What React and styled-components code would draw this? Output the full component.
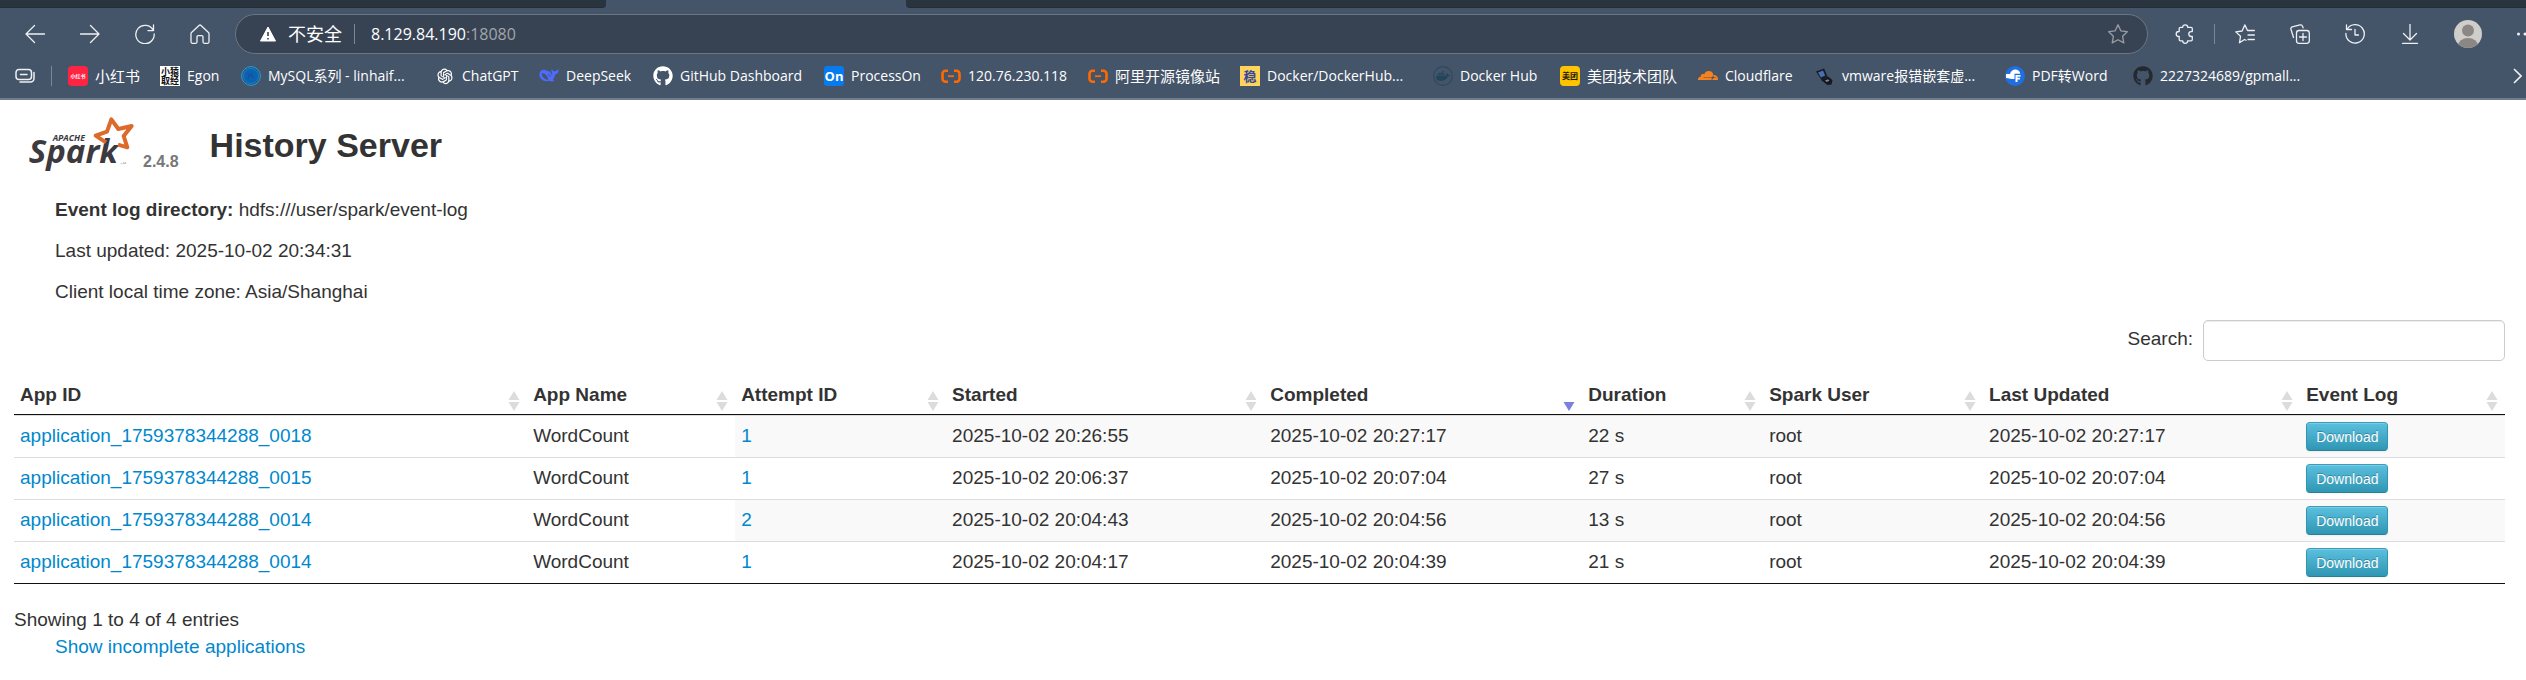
import React from 'react';
import styled, { createGlobalStyle } from 'styled-components';
import { FaGithub, FaDocker, FaCloudflare } from 'react-icons/fa';
import { AiOutlineOpenAI } from 'react-icons/ai';

const GlobalStyle = createGlobalStyle`
  * { box-sizing: border-box; }
  body {
    margin: 0;
    background: #fff;
    color: #333;
    font: 19px/27px "Liberation Sans", "Noto Sans CJK SC", sans-serif;
    overflow-x: hidden;
  }
`;

/* ---------- browser chrome ---------- */

const Chrome = styled.header`
  background: #445469;
  border-bottom: 2px solid #717c8c;
  color: #fff;
  font-family: "Open Sans", "Noto Sans CJK SC", sans-serif;
`;

const TabStrip = styled.div`
  display: flex;
  height: 8px;
`;

const InactiveTabs = styled.div`
  background: #2a343f;
  border-bottom: 1px solid #242c36;
  flex: ${(p) => (p.$last ? '1' : '0 0 24%')};
  border-radius: ${(p) => (p.$last ? '0 0 0 4px' : '0 0 4px 0')};
`;

const ActiveTab = styled.div`
  flex: 0 0 300px;
`;

const Toolbar = styled.div`
  display: flex;
  align-items: center;
  padding: 6px 0 0 7px;
  height: 46px;
`;

const ToolButton = styled.button`
  display: flex;
  align-items: center;
  justify-content: center;
  flex: 0 0 ${(p) => p.$width || 55}px;
  height: 40px;
  padding: 0;
  border: 0;
  background: none;
  color: #eef0f3;

  svg { flex: none; }
`;

const MoreButton = styled(ToolButton)`
  justify-content: flex-start;
  padding-left: 16px;
  overflow: hidden;
`;

const AddressBar = styled.div`
  flex: 1;
  min-width: 0;
  height: 40px;
  margin: 0 9px 0 8px;
  padding: 0 19px 0 24px;
  display: flex;
  align-items: center;
  background: #374353;
  border: 1px solid #6b7686;
  border-radius: 20px;
  font-size: 16px;
`;

const Insecure = styled.span`
  margin-left: 12px;
  font-size: 18px;
`;

const Divider = styled.span`
  flex: none;
  width: 1px;
  height: 20px;
  background: #7c8796;
  margin: 0 ${(p) => p.$gap || 0}px;
`;

const Address = styled.span`
  flex: 1;
  padding-left: 4px;
  color: #fff;
`;

const Port = styled.span`
  color: #a2a5aa;
`;

const StarButton = styled.button`
  display: flex;
  padding: 0;
  border: 0;
  background: none;
  color: #9a9da2;
`;

const BookmarkBar = styled.nav`
  display: flex;
  align-items: center;
  height: 44px;
  padding: 0 4px 0 15px;
`;

const BookmarkList = styled.div`
  display: flex;
  flex: 1;
  min-width: 0;
  overflow: hidden;
`;

const Bookmark = styled.a`
  display: flex;
  align-items: center;
  gap: 7px;
  flex: 0 0 ${(p) => p.$width}px;
  color: #fff;
  font-size: ${(p) => (p.$cjk ? 15 : 14)}px;
  line-height: 20px;
  text-decoration: none;
  white-space: nowrap;

  svg { flex: none; }
`;

const BarButton = styled.button`
  display: flex;
  flex: none;
  padding: 0;
  border: 0;
  background: none;
  color: #eef0f3;
`;

const Icon = ({ children, size = 20, width = 1.3 }) => (
  <svg width={size} height={size} viewBox="0 0 20 20" fill="none" stroke="currentColor"
    strokeWidth={width} strokeLinecap="round" strokeLinejoin="round" aria-hidden="true">
    {children}
  </svg>
);

const BackIcon = () => <Icon><path d="M19.5 10H1M9.5 1.5 1 10l8.500 8.500" /></Icon>;
const ForwardIcon = () => <Icon><path d="M.5 10H19M10.500 1.500 19 10l-8.500 8.500" /></Icon>;
const ReloadIcon = () => (
  <Icon><path d="M18.300 6.500A9.200 9.200 0 1 0 19.200 10M18.500 1v5.600h-5.600" /></Icon>
);
const HomeIcon = () => (
  <Icon><path d="M1.500 8.400 9 1.400a1.500 1.500 0 0 1 2 0l7.500 7c.3.300.500.700.500 1.100v8.300a1.500 1.500 0 0 1-1.500 1.500h-3a1.500 1.500 0 0 1-1.500-1.500v-5a1.200 1.200 0 0 0-1.200-1.200H8.200A1.200 1.200 0 0 0 7 12.800v5a1.500 1.500 0 0 1-1.500 1.500h-3A1.500 1.500 0 0 1 1 17.800V9.500c0-.4.200-.8.500-1.100z" /></Icon>
);
const WarningIcon = () => (
  <svg width="16" height="16" viewBox="0 0 16 16" aria-hidden="true">
    <path d="M8 1 15.500 15H.500z" fill="#fff" stroke="#fff" strokeLinejoin="round" />
    <path d="M8 6v4M8 12v1.500" stroke="#374353" strokeWidth="1.600" />
  </svg>
);
const StarIcon = () => (
  <Icon><path d="M10 .8l2.800 6 6.500.9-4.700 4.600 1.200 6.600L10 15.700l-5.800 3.200 1.200-6.600L.7 7.700l6.500-.9z" /></Icon>
);
const PuzzleIcon = () => (
  <Icon><path d="M7.700 3.300a2.500 2.500 0 0 1 5 0H16a1.300 1.300 0 0 1 1.300 1.300v3h-1.100a2.400 2.400 0 0 0 0 4.900h1.100v3a1.300 1.300 0 0 1-1.300 1.300h-3.300a2.500 2.500 0 0 1-5 0H5.500a1.300 1.300 0 0 1-1.300-1.300v-3h-.5a2.500 2.500 0 0 1 0-5h.5V4.600a1.300 1.300 0 0 1 1.300-1.300z" /></Icon>
);
const FavoritesIcon = () => (
  <Icon><path d="M11 16.300l-1.500-.8-5 3.200 1-6.400L.8 7.900l6.300-.9L9.800.900 12.500 6.500h6.900M13 11h6.400M13 15.500h6.400" /></Icon>
);
const CollectionsIcon = () => (
  <Icon>
    <rect x="6.500" y="6.500" width="12.800" height="12.800" rx="2.500" />
    <path d="M13 9.500v7M9.500 13h7M3.500 13.500 1 5.500C.600 4.300 1 3.300 2.200 2.900L10 .9c1.200-.300 2.200.300 2.600 1.500l.5 1.500" />
  </Icon>
);
const HistoryIcon = () => (
  <Icon><path d="M2.300 5A9.200 9.200 0 1 1 .9 9.500M1.500 1v4.500H6.500M10 5.500V11h3.500" /></Icon>
);
const DownloadIcon = () => <Icon><path d="M10 .5V15M3.500 9.500 10 16l6.500-6.500M2.500 19.300h15" /></Icon>;
const MoreIcon = () => (
  <svg width="20" height="20" viewBox="0 0 20 20" fill="currentColor" aria-hidden="true">
    <circle cx="3.500" cy="10" r="1.500" /><circle cx="10" cy="10" r="1.500" /><circle cx="16.500" cy="10" r="1.500" />
  </svg>
);
const AvatarIcon = () => (
  <svg width="28" height="28" viewBox="0 0 28 28" aria-hidden="true">
    <clipPath id="avatar"><circle cx="14" cy="14" r="14" /></clipPath>
    <g clipPath="url(#avatar)">
      <path fill="#d0cecb" d="M0 0h28v28H0z" />
      <circle cx="14" cy="10.500" r="6" fill="#8a8784" />
      <ellipse cx="14" cy="26" rx="10" ry="8" fill="#8a8784" />
    </g>
  </svg>
);
const StackIcon = () => (
  <Icon width={1.500}>
    <rect x="1" y="3.500" width="15.500" height="10" rx="3" />
    <path d="M5.500 8.500h6.500M19 6.500v6a3.500 3.500 0 0 1-3.500 3.500H5" />
  </Icon>
);
const ChevronIcon = () => (
  <svg width="9" height="16" viewBox="0 0 9 16" fill="none" stroke="currentColor" strokeWidth="1.600" aria-hidden="true">
    <path d="M1 1l7 7-7 7" />
  </svg>
);

const Tile = ({ bg, radius = 0, children }) => (
  <svg width="20" height="20" viewBox="0 0 20 20" aria-hidden="true">
    <rect width="20" height="20" rx={radius} fill={bg} />
    {children}
  </svg>
);
const TileText = styled.text`
  font-family: "Open Sans", "Noto Sans CJK SC", sans-serif;
  font-size: ${(p) => p.$size}px;
  font-weight: 700;
  text-anchor: middle;
`;

const RedBookIcon = () => (
  <Tile bg="#ff2442" radius={4}><TileText $size={5} x="10" y="12" fill="#fff">小红书</TileText></Tile>
);
const EgonIcon = () => (
  <Tile bg="#fff">
    <TileText $size={9} x="10" y="9" fill="#111">小猿</TileText>
    <TileText $size={9} x="10" y="18" fill="#111">取经</TileText>
  </Tile>
);
const MySqlIcon = () => (
  <svg width="20" height="20" viewBox="0 0 20 20" fill="none" aria-hidden="true">
    <circle cx="10" cy="10" r="9.400" fill="#39506a" stroke="#1fa3e0" />
    <circle cx="10" cy="10" r="7.500" fill="#0a62b4" stroke="#127fd0" />
    <path d="M7 13c1-4 2-6 3-6s1 5 3 5M7 8l6 4" stroke="#1c4f8c" />
  </svg>
);
const DeepSeekIcon = () => (
  <svg width="20" height="20" viewBox="0 0 20 20" aria-hidden="true">
    <path fill="#4d6bfe" d="M.4 8.500C.4 5.300 2.500 3.700 5 3.800c1.200 0 2 .4 3 1.200.8-.6 1.500-.3 2.400.5 1.300 1.100 2 2.200 2.500 3.400.7-.5.400-1.600-.1-2.500-.7-1.300-.5-2.700.3-3.600.2 1.500.9 2.100 2 2.400 1.200 0 2.500-.2 3.200-1.500.5-.3 1.200-.200 1.400.1-.2 2.500-1.300 4.400-3.600 4.800-.3 2.400-1.100 4-2.300 5.100.9.500 1.500 1 1.300 1.400-1.300.8-3 .5-4.300-.4C5.500 16.400.4 13.500.4 8.500z" />
    <path d="M3 7c2.500.2 5.800 3.300 6.400 6.500C6.200 14.500 2.500 10.500 3 7z" fill="#445469" />
    <path d="M9 8.500c1.200.1 2 1 2.200 2.200" stroke="#445469" fill="none" />
  </svg>
);
const ProcessOnIcon = () => (
  <Tile bg="#067bef" radius={3}><TileText $size={13} x="10" y="15" fill="#fff">On</TileText></Tile>
);
const AliyunIcon = () => (
  <svg width="20" height="20" viewBox="0 0 20 20" fill="none" stroke="#ff6a00" strokeWidth="2.600" aria-hidden="true">
    <path d="M7 4.800H4.500a3 3 0 0 0-3 3v4.900a3 3 0 0 0 3 3H7M13 4.800h2.500a3 3 0 0 1 3 3v4.900a3 3 0 0 1-3 3H13" />
    <path d="M7 10.200h6" strokeWidth="1.800" />
  </svg>
);
const WenIcon = () => (
  <Tile bg="#ffd45c"><TileText $size={13} x="10" y="15" fill="#35489a">稳</TileText></Tile>
);
const DockerHubIcon = () => (
  <svg width="20" height="20" viewBox="0 0 20 20" aria-hidden="true">
    <circle cx="10" cy="10" r="9.300" fill="none" stroke="#2e4960" strokeWidth="1.200" />
    <FaDocker x="3" y="3" size={14} color="#23455c" />
  </svg>
);
const MeituanIcon = () => (
  <Tile bg="#ffc300" radius={4}><TileText $size={8} x="10" y="13" fill="#1c1600">美团</TileText></Tile>
);
const VmwareIcon = () => (
  <svg width="20" height="20" viewBox="0 0 20 20" aria-hidden="true">
    <path d="M1 5.500 9 2.500l3.500 8L6.500 14z" fill="#161c28" />
    <path d="M3 6.500l5-2 2.200 5L6 11.500z" fill="#4a6fae" />
    <path d="M6 14l7-3.500 4.500 3.500-1 4.500-4 .5z" fill="#15181d" />
    <path d="M10 14.500l3-1.200 1.500 1.500-3 1.200z" fill="#7d8794" />
  </svg>
);
const PdfIcon = () => (
  <svg width="20" height="20" viewBox="0 0 20 20" aria-hidden="true">
    <circle cx="10" cy="10" r="10" fill="#1f6fe0" />
    <path d="M1 8h4c1-3.500 3.500-5 6-4.500 2.500.3 4 2 4.300 4.300H9.500V13C6 13 4 12.500 1 12z" fill="#fff" />
    <path d="M10.500 9h5v1.800h-3v1h2.500v1.600h-2.500V16h-2z" fill="#fff" />
  </svg>
);

const bookmarks = [
  { label: '小红书', icon: <RedBookIcon />, width: 92, cjk: true },
  { label: 'Egon', icon: <EgonIcon />, width: 81 },
  { label: 'MySQL系列 - linhaif...', icon: <MySqlIcon />, width: 194 },
  { label: 'ChatGPT', icon: <AiOutlineOpenAI size={20} />, width: 104 },
  { label: 'DeepSeek', icon: <DeepSeekIcon />, width: 114 },
  { label: 'GitHub Dashboard', icon: <FaGithub size={20} />, width: 171 },
  { label: 'ProcessOn', icon: <ProcessOnIcon />, width: 117 },
  { label: '120.76.230.118', icon: <AliyunIcon />, width: 147 },
  { label: '阿里开源镜像站', icon: <AliyunIcon />, width: 152, cjk: true },
  { label: 'Docker/DockerHub...', icon: <WenIcon />, width: 193 },
  { label: 'Docker Hub', icon: <DockerHubIcon />, width: 127 },
  { label: '美团技术团队', icon: <MeituanIcon />, width: 138, cjk: true },
  { label: 'Cloudflare', icon: <FaCloudflare size={20} color="#f6821f" />, width: 117 },
  { label: 'vmware报错嵌套虚...', icon: <VmwareIcon />, width: 190 },
  { label: 'PDF转Word', icon: <PdfIcon />, width: 128 },
  { label: '2227324689/gpmall...', icon: <FaGithub size={20} color="#24292f" />, width: 175 },
];

/* ---------- history server page ---------- */

const Page = styled.main`
  padding: 15px 21px 0 14px;
`;

const PageHeader = styled.div`
  display: flex;
  align-items: flex-end;
  padding-left: 14px;
`;

const Version = styled.span`
  margin: 0 0 2px 8px;
  color: #777;
  font-size: 16px;
  font-weight: 700;
  line-height: 16px;
`;

const Title = styled.h3`
  margin: 0 0 7px 31px;
  font-size: 34px;
  line-height: 40px;
`;

const Info = styled.ul`
  list-style: none;
  margin: 24px 0 15px;
  padding: 0 0 0 41px;
`;

const InfoItem = styled.li`
  & + & { margin-top: 14px; }
`;

const Filter = styled.label`
  display: flex;
  justify-content: flex-end;
  gap: 10px;
`;

const FilterText = styled.span`
  padding-top: 5px;
`;

const SearchInput = styled.input`
  width: 302px;
  height: 41px;
  padding: 5px 8px;
  border: 1px solid #ccc;
  border-radius: 5px;
  box-shadow: inset 0 1px 1px rgba(0, 0, 0, 0.075);
  color: #555;
  font: inherit;
`;

const Table = styled.table`
  width: 100%;
  margin-top: 10px;
  table-layout: fixed;
  border-spacing: 0;
  border-bottom: 1px solid #111;
`;

const Th = styled.th`
  width: ${(p) => p.$share}%;
  padding: 10px 7px 6px 6px;
  border-bottom: 1px solid #111;
  text-align: left;
`;

const HeadCell = styled.div`
  display: flex;
  justify-content: space-between;
  align-items: flex-end;
  height: 27px;

  svg { flex: none; margin-bottom: -3px; }
`;

const Td = styled.td`
  padding: 6px;
  height: 42px;
  border-top: 1px solid #ddd;
  vertical-align: top;
  background: ${(p) => (p.$striped ? '#f9f9f9' : '#fff')};
`;

const Link = styled.a`
  color: #08c;
  text-decoration: none;
`;

const DownloadButton = styled.button`
  display: block;
  height: 29px;
  padding: 0 9px;
  border: 1px solid #2f96b4;
  border-color: #3a9dba #2f96b4 #2a7f99;
  border-radius: 4px;
  background: linear-gradient(#5bc0de, #2f96b4);
  box-shadow: inset 0 1px 0 rgba(255, 255, 255, 0.2), 0 1px 2px rgba(0, 0, 0, 0.05);
  color: #fff;
  font: 14px/20px "Liberation Sans", sans-serif;
  text-shadow: 0 -1px 0 rgba(0, 0, 0, 0.25);
`;

const TableInfo = styled.div`
  margin-top: 22px;
`;

const Footer = styled.div`
  padding-left: 41px;
`;

const SortIcon = ({ active }) => (
  <svg width="12" height="20" viewBox="0 0 12 20" aria-hidden="true">
    {!active && <path d="M6 0l5.500 9H.5z" fill="#dcdcdc" />}
    <path d="M6 20L.5 11h11z" fill={active ? '#7b80e0' : '#dcdcdc'} />
  </svg>
);

const Wordmark = styled.text`
  font-family: "Open Sans", sans-serif;
  font-style: italic;
  font-weight: ${(p) => p.$weight};
  font-size: ${(p) => p.$size}px;
  fill: #3c3a3e;
`;

const SparkLogo = () => (
  <svg width="107" height="57" viewBox="84 345 321 171" role="img" aria-label="Apache Spark">
    <Wordmark $size={99} $weight={700} x="86" y="490">Spark</Wordmark>
    <Wordmark $size={26} $weight={700} x="158" y="424">APACHE</Wordmark>
    <path d="M318 427l-14-9-17-11 34-12 13-37 21 29 40-9-24 30 11 34-28-8" fill="none"
      stroke="#dd6a2b" strokeWidth="12" strokeLinejoin="round" />
    <path d="M362 491h6M371 492v-5l3 4 3-4v5" stroke="#888" strokeWidth="1.500" fill="none" />
  </svg>
);

const columns = [
  ['App ID', 20.6], ['App Name', 8.35], ['Attempt ID', 8.47], ['Started', 12.77],
  ['Completed', 12.77], ['Duration', 7.26], ['Spark User', 8.83], ['Last Updated', 12.73],
  ['Event Log', 8.22],
];

const rows = [
  { id: 'application_1759378344288_0018', attempt: 1, start: '2025-10-02 20:26:55', end: '2025-10-02 20:27:17', duration: '22 s' },
  { id: 'application_1759378344288_0015', attempt: 1, start: '2025-10-02 20:06:37', end: '2025-10-02 20:07:04', duration: '27 s' },
  { id: 'application_1759378344288_0014', attempt: 2, start: '2025-10-02 20:04:43', end: '2025-10-02 20:04:56', duration: '13 s' },
  { id: 'application_1759378344288_0014', attempt: 1, start: '2025-10-02 20:04:17', end: '2025-10-02 20:04:39', duration: '21 s' },
];

function BrowserChrome() {
  return (
    <Chrome>
      <TabStrip>
        <InactiveTabs />
        <ActiveTab />
        <InactiveTabs $last />
      </TabStrip>
      <Toolbar>
        <ToolButton aria-label="Back"><BackIcon /></ToolButton>
        <ToolButton aria-label="Forward"><ForwardIcon /></ToolButton>
        <ToolButton aria-label="Reload"><ReloadIcon /></ToolButton>
        <ToolButton aria-label="Home"><HomeIcon /></ToolButton>
        <AddressBar>
          <WarningIcon />
          <Insecure>不安全</Insecure>
          <Divider $gap={12} />
          <Address>8.129.84.190<Port>:18080</Port></Address>
          <StarButton aria-label="Add to favorites"><StarIcon /></StarButton>
        </AddressBar>
        <ToolButton aria-label="Extensions"><PuzzleIcon /></ToolButton>
        <Divider $gap={2} />
        <ToolButton aria-label="Favorites"><FavoritesIcon /></ToolButton>
        <ToolButton aria-label="Collections"><CollectionsIcon /></ToolButton>
        <ToolButton aria-label="History"><HistoryIcon /></ToolButton>
        <ToolButton aria-label="Downloads"><DownloadIcon /></ToolButton>
        <ToolButton $width={62} aria-label="Profile"><AvatarIcon /></ToolButton>
        <MoreButton $width={27} aria-label="More"><MoreIcon /></MoreButton>
      </Toolbar>
      <BookmarkBar>
        <BarButton aria-label="Workspaces"><StackIcon /></BarButton>
        <Divider $gap={16} />
        <BookmarkList>
          {bookmarks.map((b) => (
            <Bookmark key={b.label} href="#" $width={b.width} $cjk={b.cjk}>
              {b.icon}
              <span>{b.label}</span>
            </Bookmark>
          ))}
        </BookmarkList>
        <BarButton aria-label="More bookmarks"><ChevronIcon /></BarButton>
      </BookmarkBar>
    </Chrome>
  );
}

export default function App() {
  return (
    <>
      <GlobalStyle />
      <BrowserChrome />
      <Page>
        <PageHeader>
          <SparkLogo />
          <Version>2.4.8</Version>
          <Title>History Server</Title>
        </PageHeader>
        <Info>
          <InfoItem><strong>Event log directory:</strong> hdfs:///user/spark/event-log</InfoItem>
          <InfoItem>Last updated: 2025-10-02 20:34:31</InfoItem>
          <InfoItem>Client local time zone: Asia/Shanghai</InfoItem>
        </Info>
        <Filter>
          <FilterText>Search:</FilterText>
          <SearchInput type="search" />
        </Filter>
        <Table>
          <thead>
            <tr>
              {columns.map(([name, share]) => (
                <Th key={name} $share={share}>
                  <HeadCell>{name}<SortIcon active={name === 'Completed'} /></HeadCell>
                </Th>
              ))}
            </tr>
          </thead>
          <tbody>
            {rows.map((r, i) => {
              const striped = i % 2 === 0;
              return (
                <tr key={r.start}>
                  <Td><Link href="#">{r.id}</Link></Td>
                  <Td>WordCount</Td>
                  <Td $striped={striped}><Link href="#">{r.attempt}</Link></Td>
                  <Td $striped={striped}>{r.start}</Td>
                  <Td $striped={striped}>{r.end}</Td>
                  <Td $striped={striped}>{r.duration}</Td>
                  <Td $striped={striped}>root</Td>
                  <Td $striped={striped}>{r.end}</Td>
                  <Td $striped={striped}><DownloadButton>Download</DownloadButton></Td>
                </tr>
              );
            })}
          </tbody>
        </Table>
        <TableInfo>Showing 1 to 4 of 4 entries</TableInfo>
        <Footer><Link href="#">Show incomplete applications</Link></Footer>
      </Page>
    </>
  );
}
